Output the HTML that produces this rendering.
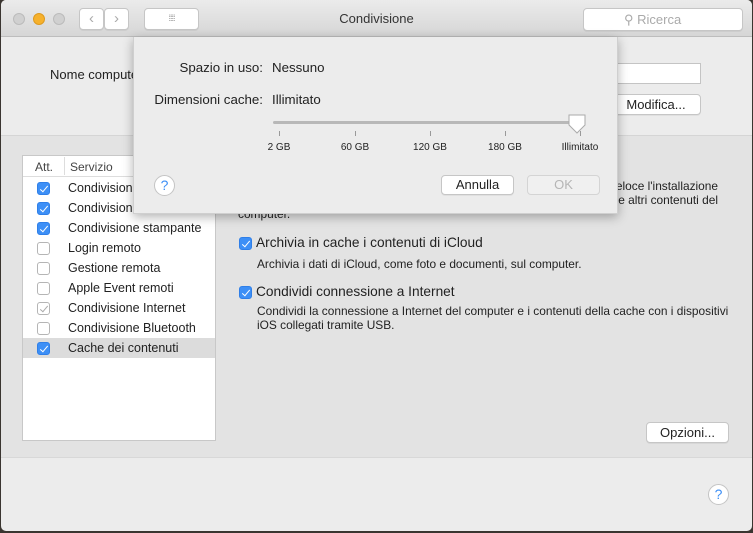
<!DOCTYPE html>
<html><head><style>
*{margin:0;padding:0;box-sizing:border-box}
body{width:753px;height:533px;overflow:hidden;background:#3a3530;font-family:"Liberation Sans",sans-serif;font-size:12px;color:#222;position:relative}
.a{position:absolute}
.win{left:1px;top:0;width:751px;height:531px;background:#ececec;border-radius:5px;overflow:hidden}
.tb{left:0;top:0;width:751px;height:37px;background:linear-gradient(#ebebeb,#d6d6d6);border-bottom:1px solid #bdbdbd}
.btn{background:#fff;border:1px solid #c6c6c6;border-radius:4px;box-shadow:0 1px 0 rgba(0,0,0,.05)}
.cb{width:13px;height:13px;border-radius:3px;border:1px solid #b5b5b5;background:#fff}
.cb.on{background:#3d8ff6;border-color:#2f7fe8}
.cb.on:after{content:"";position:absolute;left:4px;top:1px;width:3px;height:7px;border:solid #fff;border-width:0 1.5px 1.5px 0;transform:rotate(40deg)}
.cb.dim:after{content:"";position:absolute;left:4px;top:1px;width:3px;height:7px;border:solid #aaa;border-width:0 1px 1px 0;transform:rotate(40deg)}
.help{width:21px;height:21px;border-radius:50%;background:#fff;border:1px solid #c4c4c4;color:#3d8ff6;text-align:center;line-height:19px;font-size:14px}
</style></head><body>
<div class="a win">
 <div class="a tb"></div>
 <div class="a" style="left:12px;top:13px;width:12px;height:12px;border-radius:50%;background:#d0d0d0;border:1px solid #bbb"></div>
 <div class="a" style="left:32px;top:13px;width:12px;height:12px;border-radius:50%;background:#f6b12c;border:1px solid #dd9a20"></div>
 <div class="a" style="left:52px;top:13px;width:12px;height:12px;border-radius:50%;background:#d0d0d0;border:1px solid #bbb"></div>
 <div class="a btn" style="left:78px;top:8px;width:25px;height:22px;color:#aaa;text-align:center;line-height:20px;font-size:15px">‹</div>
 <div class="a btn" style="left:103px;top:8px;width:25px;height:22px;color:#aaa;text-align:center;line-height:20px;font-size:15px">›</div>
 <div class="a btn" style="left:143px;top:8px;width:55px;height:22px;color:#999;text-align:center;line-height:18px;font-size:9px;letter-spacing:-1px">⁞⁞⁞⁞</div>
 <div class="a" style="left:0;top:11px;width:751px;text-align:center;font-size:13px;color:#333">Condivisione</div>
 <div class="a btn" style="left:582px;top:8px;width:160px;height:23px;color:#aaa;font-size:13px;padding:3px 0 0 40px">⚲ Ricerca</div>
 <div class="a" style="left:49px;top:67px;font-size:13px">Nome computer:</div>
 <div class="a" style="left:600px;top:63px;width:100px;height:21px;background:#fff;border:1px solid #c4c4c4"></div>
 <div class="a btn" style="left:610px;top:94px;width:90px;height:21px;font-size:13px;text-align:center;line-height:19px">Modifica...</div>
 <div class="a" style="left:0;top:135px;width:751px;height:323px;background:#e3e3e3;border-top:1px solid #d5d5d5;border-bottom:1px solid #d8d8d8"></div>
 <div class="a" style="left:21px;top:155px;width:194px;height:286px;background:#fff;border:1px solid #c8c8c8"></div>
 <div class="a" style="left:22px;top:156px;width:192px;height:21px;border-bottom:1px solid #ddd;font-size:12px;color:#444"><span class="a" style="left:12px;top:4px">Att.</span><span class="a" style="left:41px;top:1px;width:1px;height:18px;background:#ddd"></span><span class="a" style="left:47px;top:4px">Servizio</span></div>
 <div class="a" style="left:22px;top:338px;width:192px;height:20px;background:#dcdcdc"></div>
 <div class="a cb on" style="left:36px;top:182px"></div><div class="a" style="left:67px;top:181px;font-size:12.5px">Condivisione schermo</div>
 <div class="a cb on" style="left:36px;top:202px"></div><div class="a" style="left:67px;top:201px;font-size:12.5px">Condivisione documenti</div>
 <div class="a cb on" style="left:36px;top:222px"></div><div class="a" style="left:67px;top:221px;font-size:12.5px">Condivisione stampante</div>
 <div class="a cb" style="left:36px;top:242px"></div><div class="a" style="left:67px;top:241px;font-size:12.5px">Login remoto</div>
 <div class="a cb" style="left:36px;top:262px"></div><div class="a" style="left:67px;top:261px;font-size:12.5px">Gestione remota</div>
 <div class="a cb" style="left:36px;top:282px"></div><div class="a" style="left:67px;top:281px;font-size:12.5px">Apple Event remoti</div>
 <div class="a cb dim" style="left:36px;top:302px"></div><div class="a" style="left:67px;top:301px;font-size:12.5px">Condivisione Internet</div>
 <div class="a cb" style="left:36px;top:322px"></div><div class="a" style="left:67px;top:321px;font-size:12.5px">Condivisione Bluetooth</div>
 <div class="a cb on" style="left:36px;top:342px"></div><div class="a" style="left:67px;top:341px;font-size:12.5px">Cache dei contenuti</div>
 <div class="a" style="left:237px;top:179px;font-size:11.9px;line-height:14px;width:480px;text-align:right">veloce l'installazione<br>e altri contenuti del</div>
 <div class="a" style="left:237px;top:207px;font-size:11.9px">computer.</div>
 <div class="a cb on" style="left:238px;top:237px"></div><div class="a" style="left:255px;top:235px;font-size:13.7px">Archivia in cache i contenuti di iCloud</div>
 <div class="a" style="left:256px;top:257px;font-size:11.9px">Archivia i dati di iCloud, come foto e documenti, sul computer.</div>
 <div class="a cb on" style="left:238px;top:286px"></div><div class="a" style="left:255px;top:284px;font-size:13.7px">Condividi connessione a Internet</div>
 <div class="a" style="left:256px;top:304px;font-size:11.9px;line-height:14px">Condividi la connessione a Internet del computer e i contenuti della cache con i dispositivi<br>iOS collegati tramite USB.</div>
 <div class="a btn" style="left:645px;top:422px;width:83px;height:21px;font-size:13px;text-align:center;line-height:19px">Opzioni...</div>
 <div class="a help" style="left:707px;top:484px">?</div>
</div>
<div class="a" style="left:133px;top:37px;width:485px;height:177px;background:#ececec;box-shadow:0 3px 10px rgba(0,0,0,.3);border:1px solid #cfcfcf;border-top:none">
 <div class="a" style="left:0;top:23px;width:129px;text-align:right;font-size:13.3px">Spazio in uso:</div>
 <div class="a" style="left:138px;top:23px;font-size:13.3px">Nessuno</div>
 <div class="a" style="left:0;top:55px;width:129px;text-align:right;font-size:13.3px">Dimensioni cache:</div>
 <div class="a" style="left:138px;top:55px;font-size:13.3px">Illimitato</div>
 <div class="a" style="left:139px;top:84px;width:305px;height:3px;background:#b8b8b8;border-radius:2px"></div>
 <svg class="a" style="left:433px;top:76px" width="20" height="22"><path d="M2 2h16v10l-8 8-8-8z" fill="#fff" stroke="#aaa"/></svg>
 <div class="a" style="left:145px;top:94px;width:1px;height:5px;background:#999"></div>
 <div class="a" style="left:221px;top:94px;width:1px;height:5px;background:#999"></div>
 <div class="a" style="left:296px;top:94px;width:1px;height:5px;background:#999"></div>
 <div class="a" style="left:371px;top:94px;width:1px;height:5px;background:#999"></div>
 <div class="a" style="left:446px;top:94px;width:1px;height:5px;background:#999"></div>
 <div class="a" style="left:125px;top:105px;width:40px;text-align:center;font-size:10px">2 GB</div>
 <div class="a" style="left:201px;top:105px;width:40px;text-align:center;font-size:10px">60 GB</div>
 <div class="a" style="left:276px;top:105px;width:40px;text-align:center;font-size:10px">120 GB</div>
 <div class="a" style="left:351px;top:105px;width:40px;text-align:center;font-size:10px">180 GB</div>
 <div class="a" style="left:413px;top:105px;width:66px;text-align:center;font-size:10px">Illimitato</div>
 <div class="a help" style="left:20px;top:138px">?</div>
 <div class="a btn" style="left:307px;top:138px;width:73px;height:20px;font-size:13px;text-align:center;line-height:18px">Annulla</div>
 <div class="a" style="left:393px;top:138px;width:73px;height:20px;font-size:13px;text-align:center;line-height:18px;border:1px solid #d4d4d4;border-radius:4px;background:#f0f0f0;color:#b5b5b5">OK</div>
</div>
</body></html>
